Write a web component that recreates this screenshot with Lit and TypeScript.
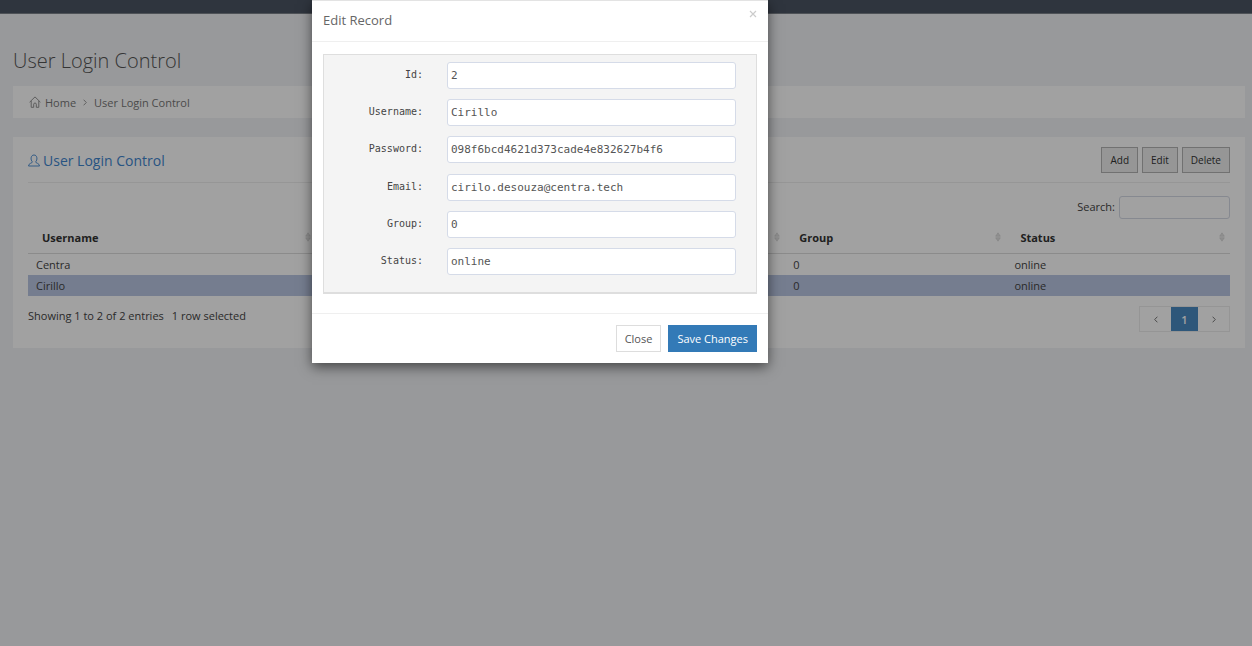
import { LitElement, html, css, svg } from "lit";
import { customElement, property, state } from "lit/decorators.js";

interface UserRecord {
  id: string;
  username: string;
  password: string;
  email: string;
  group: string;
  status: string;
}

const RECORDS: UserRecord[] = [
  { id: "1", username: "Centra", password: "********", email: "admin@centra.tech", group: "0", status: "online" },
  {
    id: "2",
    username: "Cirillo",
    password: "098f6bcd4621d373cade4e832627b4f6",
    email: "cirilo.desouza@centra.tech",
    group: "0",
    status: "online",
  },
];

const FIELDS: { key: keyof UserRecord; label: string }[] = [
  { key: "id", label: "Id:" },
  { key: "username", label: "Username:" },
  { key: "password", label: "Password:" },
  { key: "email", label: "Email:" },
  { key: "group", label: "Group:" },
  { key: "status", label: "Status:" },
];

@customElement("edit-record-dialog")
class EditRecordDialog extends LitElement {
  @property({ attribute: false }) record!: UserRecord;

  static styles = css`
    :host {
      display: block;
      width: 456px;
      background: #fff;
      border-top: 1px solid #e3e3e3;
      box-sizing: border-box;
      box-shadow: 0 4px 12px rgba(0, 0, 0, 0.55);
      font-family: "Open Sans", sans-serif;
      color: #555;
    }
    .header {
      display: flex;
      justify-content: space-between;
      align-items: flex-start;
      padding: 9px 11px 10px;
      border-bottom: 1px solid #efefef;
    }
    .title {
      margin: 0;
      font-size: 13px;
      line-height: 21px;
      font-weight: 400;
      color: #666;
    }
    .dismiss {
      border: 0;
      padding: 0;
      background: none;
      color: #ccc;
      width: 8px;
      display: flex;
    }
    .body {
      padding: 12px 11px 19px;
    }
    .fields {
      display: grid;
      align-content: space-between;
      min-height: 240px;
      box-sizing: border-box;
      padding: 7px 20px 17px;
      border: 1px solid #dedede;
      border-bottom-width: 2px;
      background: #f4f4f4;
    }
    .row {
      display: grid;
      grid-template-columns: 79px 1fr;
      column-gap: 24px;
    }
    .label {
      font: 10px/25px "DejaVu Sans Mono", monospace;
      text-align: right;
      color: #444;
    }
    .input {
      height: 27px;
      min-width: 0;
      box-sizing: border-box;
      padding: 0 3px;
      border: 1px solid #d5dbe8;
      border-radius: 3px;
      background: #fff;
      font: 11px "DejaVu Sans Mono", monospace;
      color: #555;
    }
    .footer {
      display: flex;
      justify-content: flex-end;
      gap: 7px;
      padding: 11px;
      border-top: 1px solid #efefef;
    }
    .button {
      height: 27px;
      padding: 0 8px;
      border: 1px solid #ddd;
      background: #fff;
      font: 11px "Open Sans", sans-serif;
      color: #555;
    }
    .primary {
      border-color: #337ab7;
      background: #337ab7;
      color: #fff;
      font-weight: 500;
    }
  `;

  render() {
    return html`
      <div class="header">
        <h4 class="title">Edit Record</h4>
        <button class="dismiss" aria-label="Dismiss">
          <svg width="8" height="8" viewBox="0 0 8 8" fill="none" stroke="currentColor" stroke-width="1.2"><path d="M1 1l6 6M7 1l-6 6" /></svg>
        </button>
      </div>
      <div class="body">
        <div class="fields">
          ${FIELDS.map(
            (f) => html`<div class="row">
              <label class="label" for=${f.key}>${f.label}</label>
              <input class="input" id=${f.key} type="text" .value=${this.record[f.key]} />
            </div>`
          )}
        </div>
      </div>
      <div class="footer">
        <button class="button">Close</button>
        <button class="button primary">Save Changes</button>
      </div>
    `;
  }
}

const sortIcon = svg`<svg class="sort" width="6" height="10" viewBox="0 0 6 10" fill="#e4e4e4" stroke="#ccc" stroke-width="0.6"><path d="M3 .8L5.300 4.200H.7zM3 9.200L.7 5.800h4.600z"/></svg>`;

@customElement("app-root")
class AppRoot extends LitElement {
  @state() private selected = 1;

  static styles = css`
    :host {
      display: block;
      position: relative;
      min-height: 100vh;
      box-sizing: border-box;
      overflow: hidden;
      background: #f1f3f5;
      font-family: "Open Sans", sans-serif;
      font-size: 11px;
      color: #444;
    }
    .topbar {
      height: 13px;
      background: #4b5563;
      border-bottom: 1px solid #7c828a;
    }
    .page {
      padding: 34px 7px 0 13px;
    }
    .heading {
      margin: 0;
      font-size: 20px;
      line-height: 26px;
      font-weight: 300;
      color: #555;
    }
    .crumbs {
      display: flex;
      align-items: center;
      margin-top: 12px;
      height: 32px;
      padding: 0 16px;
      background: #fff;
      color: #777;
    }
    .crumbs a {
      color: inherit;
      text-decoration: none;
    }
    .home {
      margin-right: 4px;
    }
    .chevron {
      margin: 0 7px;
    }
    .card {
      margin-top: 19px;
      padding: 8px 15px 16px;
      background: #fff;
    }
    .card-head {
      display: flex;
      align-items: center;
      justify-content: space-between;
      padding: 2px 0 9px;
      border-bottom: 1px solid #eee;
    }
    .card-title {
      display: flex;
      align-items: center;
      gap: 3px;
      margin: 0;
      font-size: 14px;
      font-weight: 400;
      color: #3f86cf;
    }
    .actions {
      display: flex;
      gap: 4px;
    }
    .action {
      height: 26px;
      padding: 0 8px;
      border: 1px solid #b4b4b4;
      background: #eee;
      font: 10px "Open Sans", sans-serif;
      color: #333;
    }
    .filter {
      display: flex;
      justify-content: flex-end;
      gap: 4px;
      margin-top: 13px;
      line-height: 21px;
    }
    .search {
      width: 111px;
      height: 23px;
      box-sizing: border-box;
      border: 1px solid #d4d9e4;
      border-radius: 3px;
      background: #fff;
    }
    .table {
      width: 100%;
      table-layout: fixed;
      border-collapse: collapse;
    }
    .c-name {
      width: 24%;
    }
    .c-mid {
      width: 39%;
    }
    .c-group {
      width: 18.4%;
    }
    .th {
      height: 32px;
      padding: 2px 5px 0 14px;
      border-bottom: 1px solid #ddd;
      text-align: left;
      font-weight: 700;
      color: #333;
    }
    .th-inner {
      display: flex;
      align-items: center;
      justify-content: space-between;
    }
    .td {
      height: 21px;
      padding: 0 8px;
      white-space: nowrap;
      overflow: hidden;
      text-overflow: ellipsis;
    }
    .centered {
      text-align: center;
    }
    .selected {
      background: #b9c6e2;
    }
    .table-foot {
      display: flex;
      justify-content: space-between;
      align-items: flex-start;
      padding-top: 10px;
    }
    .summary {
      display: flex;
      gap: 8px;
      line-height: 20px;
    }
    .pager {
      display: flex;
      border: 1px solid #ececec;
    }
    .page-link {
      display: flex;
      align-items: center;
      justify-content: center;
      width: 31px;
      height: 24px;
      color: #777;
      text-decoration: none;
    }
    .current {
      width: 27px;
      background: #4a8ac2;
      color: #fff;
      font-weight: 600;
    }
    .backdrop {
      position: absolute;
      inset: 0;
      background: rgba(0, 0, 0, 0.37);
    }
    .dialog {
      position: absolute;
      top: 0;
      left: calc(50% - 314px);
    }
  `;

  render() {
    return html`
      <div class="topbar"></div>
      <main class="page">
        <h3 class="heading">User Login Control</h3>
        <nav class="crumbs">
          <svg class="home" width="12" height="12" viewBox="0 0 12 12" fill="none" stroke="#888" stroke-width="0.9"><path d="M.6 6.200L6 .9l5.400 5.300M2.200 5v6.300h2.500V8.200c0-1.600 2.600-1.600 2.600 0v3.100h2.500V5" /></svg>
          <a href="#home">Home</a>
          <svg class="chevron" width="4" height="7" viewBox="0 0 4 7" fill="none" stroke="#999"><path d="M.6.7l2.700 2.800L.6 6.300" /></svg>
          <a href="#users">User Login Control</a>
        </nav>
        <section class="card">
          <div class="card-head">
            <h4 class="card-title">
              <svg width="12" height="13" viewBox="0 0 12 13" fill="none" stroke="currentColor" stroke-width="0.9"><path d="M4.500 7.900C2.300 6.200 2.500 1 6 1s3.700 5.200 1.500 6.900c0 1.300 4 1.200 4 4.100H.5C.5 9.100 4.500 9.200 4.500 7.900z" /></svg>
              User Login Control
            </h4>
            <div class="actions">
              <button class="action">Add</button>
              <button class="action">Edit</button>
              <button class="action">Delete</button>
            </div>
          </div>
          <div class="filter">
            <label for="search">Search:</label>
            <input class="search" id="search" type="search" />
          </div>
          <table class="table">
            <colgroup>
              <col class="c-name" />
              <col class="c-mid" />
              <col class="c-group" />
              <col />
            </colgroup>
            <thead>
              <tr>
                ${["Username", "Email", "Group", "Status"].map(
                  (h) => html`<th class="th"><div class="th-inner">${h}${sortIcon}</div></th>`
                )}
              </tr>
            </thead>
            <tbody>
              ${RECORDS.map(
                (r, i) => html`<tr class=${i === this.selected ? "selected" : ""} @click=${() => (this.selected = i)}>
                  <td class="td">${r.username}</td>
                  <td class="td centered">${r.email}</td>
                  <td class="td">${r.group}</td>
                  <td class="td">${r.status}</td>
                </tr>`
              )}
            </tbody>
          </table>
          <div class="table-foot">
            <div class="summary"><span>Showing 1 to 2 of 2 entries</span><span>1 row selected</span></div>
            <nav class="pager">
              <a class="page-link" href="#prev" aria-label="Previous"><svg width="4" height="7" viewBox="0 0 4 7" fill="none" stroke="currentColor"><path d="M3.400.7L.7 3.500l2.700 2.800" /></svg></a>
              <a class="page-link current" href="#1">1</a>
              <a class="page-link" href="#next" aria-label="Next"><svg width="4" height="7" viewBox="0 0 4 7" fill="none" stroke="currentColor"><path d="M.6.7l2.700 2.800L.6 6.300" /></svg></a>
            </nav>
          </div>
        </section>
      </main>
      <div class="backdrop"></div>
      <edit-record-dialog class="dialog" role="dialog" .record=${RECORDS[this.selected]}></edit-record-dialog>
    `;
  }
}
